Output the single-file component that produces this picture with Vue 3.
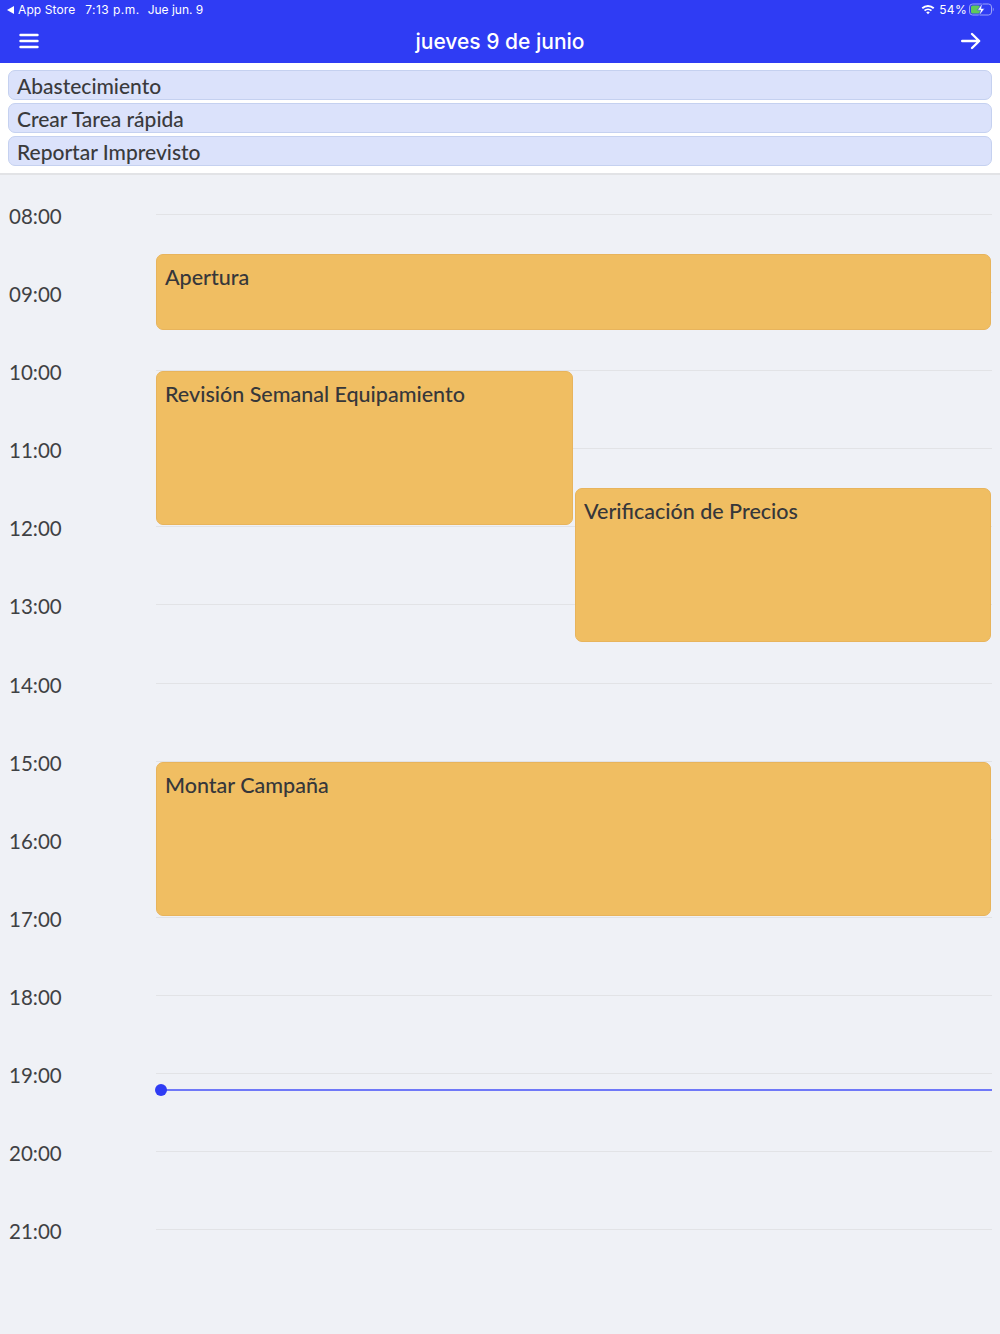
<template>
  <div class="screen">
    <header class="app-header">
      <div class="status-bar">
        <div class="status-left">
          <span class="back-arrow"></span>
          <span class="status-app">App Store</span>
          <span class="status-time">7:13 p.m.</span>
          <span class="status-date">Jue jun. 9</span>
        </div>
        <div class="status-right">
          <svg class="wifi" width="14" height="11" viewBox="0 0 14 11">
            <path d="M0.6 3.6 A9.2 9.2 0 0 1 13.4 3.6 L12.1 5 A7.3 7.3 0 0 0 1.9 5 Z" fill="#fff" />
            <path d="M2.9 6 A6 6 0 0 1 11.1 6 L9.8 7.3 A4.1 4.1 0 0 0 4.2 7.3 Z" fill="#fff" />
            <path d="M5.2 8.3 A2.8 2.8 0 0 1 8.8 8.3 L7 10.3 Z" fill="#fff" />
          </svg>
          <span class="status-level">54%</span>
          <svg class="battery" width="26" height="13" viewBox="0 0 26 13">
            <rect x="0.5" y="1" width="22" height="11" rx="3" fill="none" stroke="#9aa2f8" />
            <rect x="2" y="2.5" width="9" height="8" rx="1.5" fill="#5fc85a" />
            <path d="M23.8 4.6 C25 5 25 8 23.8 8.4 Z" fill="#9aa2f8" />
            <path d="M13.5 0 L8.5 7.2 H11.6 L10 13 L15.6 5.5 H12.4 Z" fill="#fff" stroke="#2f3cf4" stroke-width="0.6" />
          </svg>
        </div>
      </div>
      <div class="nav-bar">
        <button class="nav-btn">
          <svg width="20" height="16" viewBox="0 0 20 16">
            <path d="M1.5 2 H18.5 M1.5 8 H18.5 M1.5 14 H18.5" stroke="#fff" stroke-width="2.4" stroke-linecap="round" />
          </svg>
        </button>
        <h1 class="nav-title">{{ title }}</h1>
        <button class="nav-btn">
          <svg width="20" height="18" viewBox="0 0 20 18">
            <path d="M1.2 9 H18 M11 2 L18.2 9 L11 16" fill="none" stroke="#fff" stroke-width="2.4" stroke-linecap="round" stroke-linejoin="round" />
          </svg>
        </button>
      </div>
    </header>

    <div class="actions">
      <button class="action-btn" v-for="action in actions" :key="action">{{ action }}</button>
    </div>

    <div class="timeline">
      <div class="hour-row" v-for="hour in hours" :key="hour">
        <span class="hour-label">{{ hour }}</span>
        <span class="hour-line"></span>
      </div>

      <div
        class="event"
        v-for="event in events"
        :key="event.name"
        :class="event.column"
        :style="{ top: event.top + 'px', height: event.height + 'px' }"
      >
        {{ event.name }}
      </div>

      <div class="now-line">
        <span class="now-dot"></span>
      </div>
    </div>
  </div>
</template>

<script setup>
const title = 'jueves 9 de junio'

const actions = ['Abastecimiento', 'Crear Tarea rápida', 'Reportar Imprevisto']

const hours = [
  '08:00', '09:00', '10:00', '11:00', '12:00', '13:00', '14:00',
  '15:00', '16:00', '17:00', '18:00', '19:00', '20:00', '21:00',
]

// top es relativo al timeline (empieza en y=175)
const events = [
  { name: 'Apertura', top: 79, height: 76, column: 'full' },
  { name: 'Revisión Semanal Equipamiento', top: 196, height: 154, column: 'left' },
  { name: 'Verificación de Precios', top: 313, height: 154, column: 'right' },
  { name: 'Montar Campaña', top: 587, height: 154, column: 'full' },
]
</script>

<style>
html,
body {
  margin: 0;
  background: #eff1f6;
}
</style>

<style scoped>
.screen {
  height: 1334px;
  overflow: hidden;
  background: #eff1f6;
  font-family: "Lato", "Liberation Sans", sans-serif;
  color: #3a3a3c;
}

.app-header {
  height: 63px;
  background: #2f3cf4;
  color: #fff;
}

.status-bar {
  height: 19px;
  padding: 0 5px 0 7px;
  display: flex;
  justify-content: space-between;
  align-items: center;
  font-family: "Inter", "Liberation Sans", sans-serif;
  font-size: 12px;
}

.status-left,
.status-right {
  display: flex;
  align-items: center;
}

.back-arrow {
  width: 0;
  height: 0;
  margin-right: 4px;
  border-top: 4px solid transparent;
  border-bottom: 4px solid transparent;
  border-right: 7px solid #fff;
}

.status-app {
  letter-spacing: 0.1px;
}

.status-time {
  margin-left: 10px;
  letter-spacing: 0.45px;
}

.status-date {
  margin-left: 8px;
}

.status-level {
  margin: 0 2px 0 4px;
  letter-spacing: 0.3px;
}

.nav-bar {
  height: 44px;
  padding: 0 19px;
  display: flex;
  justify-content: space-between;
  align-items: center;
}

.nav-btn {
  padding: 0;
  border: none;
  background: none;
  display: flex;
}

.nav-title {
  margin: 0;
  font-family: "Inter", "Liberation Sans", sans-serif;
  font-size: 21px;
  font-weight: 500;
}

.actions {
  height: 112px;
  padding: 7px 8px 0;
  box-sizing: border-box;
  display: flex;
  flex-direction: column;
  gap: 3px;
  background: #fff;
  border-bottom: 2px solid #e2e3e6;
}

.action-btn {
  height: 30px;
  padding: 1px 8px 0;
  box-sizing: border-box;
  text-align: left;
  font-family: inherit;
  font-size: 21px;
  font-weight: 500;
  line-height: 28px;
  color: #3a3a3c;
  background: #dbe2fb;
  border: 1px solid #c5d1f0;
  border-radius: 7px;
}

.timeline {
  position: relative;
}

.hour-row {
  height: 78.1px;
  display: flex;
  align-items: flex-start;
}

.hour-label {
  width: 156px;
  padding: 28px 0 0 9px;
  box-sizing: border-box;
  font-size: 20.5px;
  line-height: 26px;
  color: #3f4144;
}

.hour-line {
  flex: 1;
  height: 1px;
  margin: 39px 8px 0 0;
  background: #e2e3e6;
}

.event {
  position: absolute;
  padding: 8px;
  box-sizing: border-box;
  font-size: 21.5px;
  font-weight: 500;
  line-height: 28px;
  color: #36373a;
  background: #f0be62;
  border: 1px solid #e8b45c;
  border-radius: 7px;
}

.event.full {
  left: 156px;
  right: 9px;
}

.event.left {
  left: 156px;
  width: 417px;
}

.event.right {
  left: 575px;
  right: 9px;
}

.now-line {
  position: absolute;
  top: 914px;
  left: 161px;
  right: 8px;
  height: 2px;
  background: #6f78f8;
}

.now-dot {
  position: absolute;
  top: -5px;
  left: -6px;
  width: 12px;
  height: 12px;
  border-radius: 50%;
  background: #2f3cf4;
}
</style>
